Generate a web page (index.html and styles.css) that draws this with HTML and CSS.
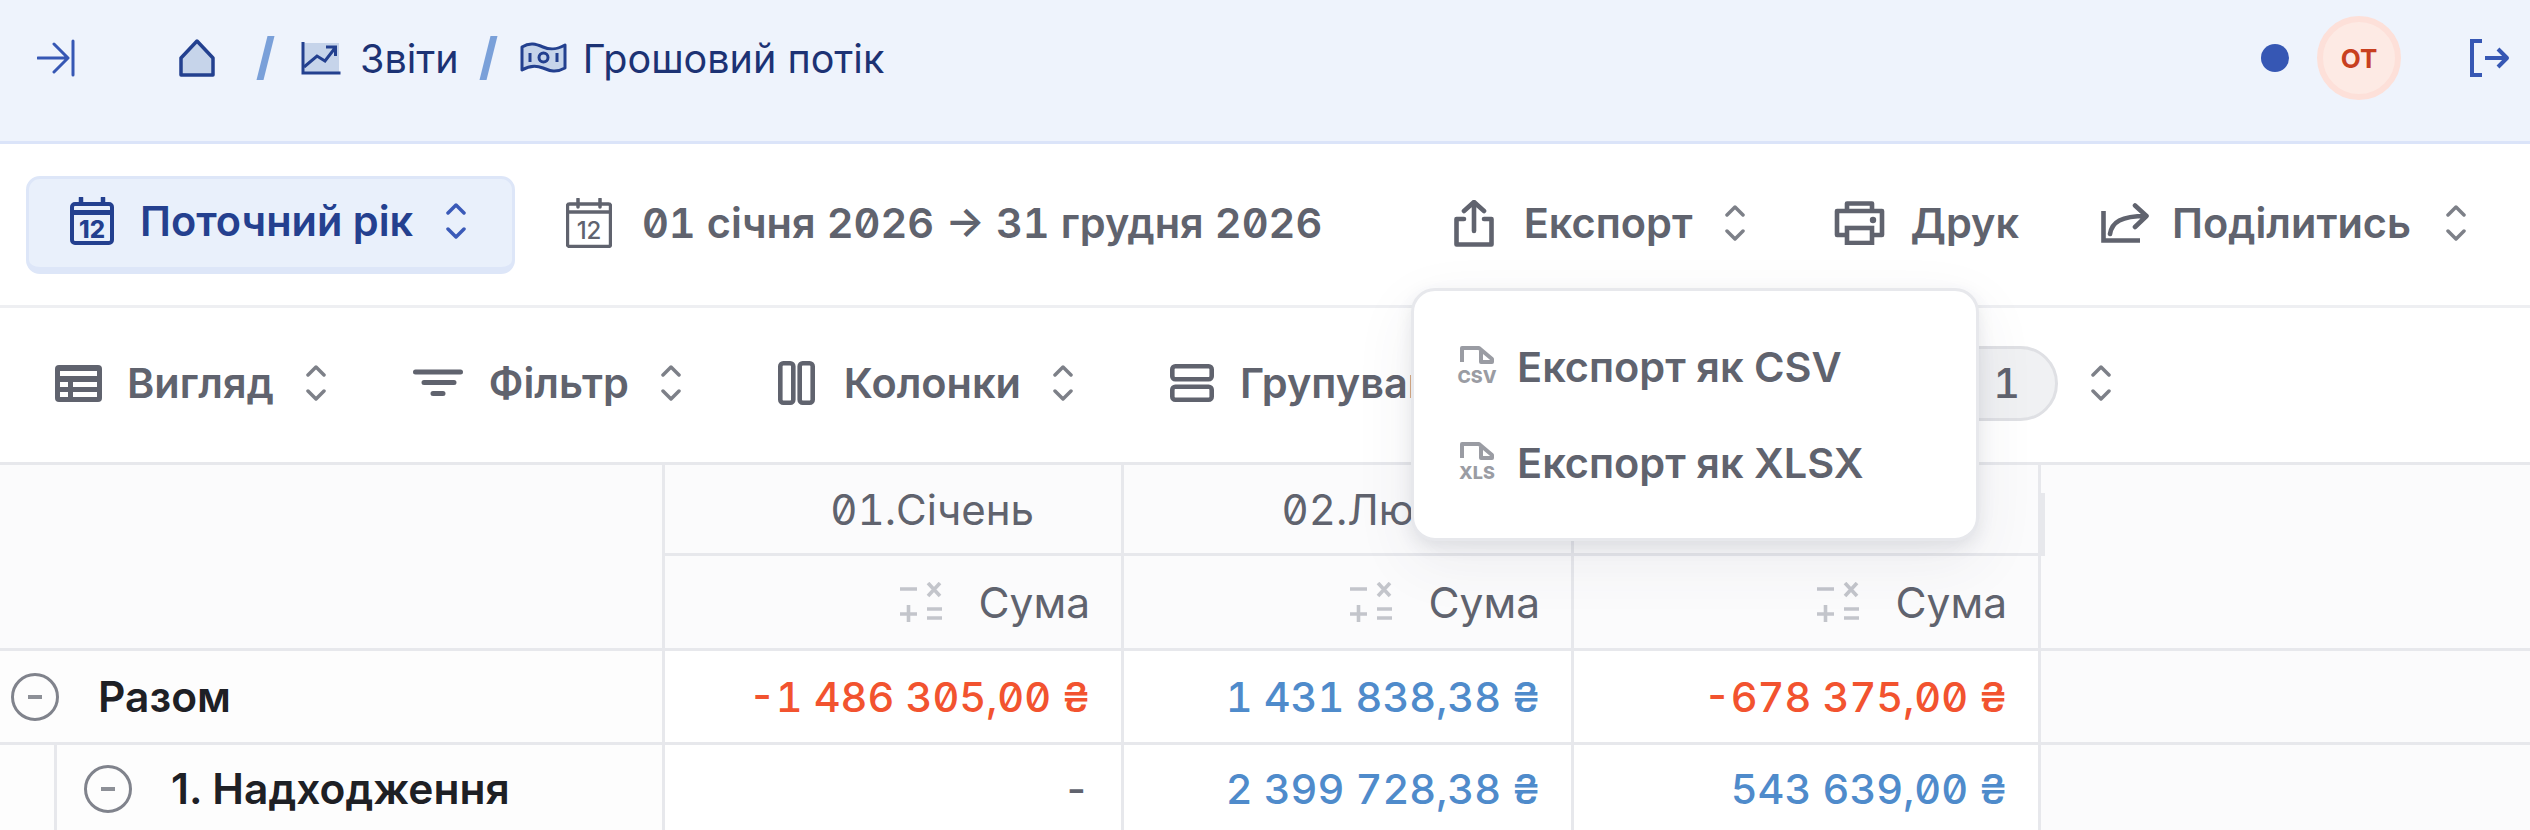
FILE: index.html
```html
<!DOCTYPE html>
<html lang="uk">
<head>
    <meta charset="UTF-8">
    <meta name="viewport" content="width=device-width, initial-scale=1.0">
    <title>Грошовий потік</title>
    <link rel="stylesheet" href="styles.css">
</head>
<body>

    <svg class="defs" width="0" height="0">
        <symbol id="updown" viewBox="0 0 20 36">
            <path d="M2 10 L10 2 L18 10 M2 26 L10 34 L18 26" fill="none" stroke="currentColor" stroke-width="3.5" stroke-linecap="round" stroke-linejoin="round"/>
        </symbol>
        <symbol id="minus" viewBox="0 0 48 48">
            <circle cx="24" cy="24" r="22.5" fill="none" stroke="#80838c" stroke-width="3"/>
            <path d="M17 24 H31" stroke="#8d9097" stroke-width="4"/>
        </symbol>
        <symbol id="calc" viewBox="0 0 44 40">
            <path d="M1 7 H18 M29 1 L41 14 M41 1 L29 14 M1 32 H18 M9.5 23 V40 M28 27 H43 M28 36 H43" fill="none" stroke="#c3c5cb" stroke-width="3.6"/>
        </symbol>
    </svg>

    <header class="topbar">
        <svg class="ico-side" width="38" height="38" viewBox="0 0 38 38">
            <path d="M1 19 H30 M17 5 L31 19 L17 33 M36 2 V36" fill="none" stroke="#3657b4" stroke-width="3" stroke-linecap="round" stroke-linejoin="round"/>
        </svg>
        <nav class="crumbs">
            <svg width="36" height="38" viewBox="0 0 36 38">
                <path d="M2 19 L18 2 L34 19 V36 H2 Z" fill="#c6d4ea" stroke="#23408f" stroke-width="3.5" stroke-linejoin="round"/>
            </svg>
            <span class="slash slash-first"></span>
            <svg width="40" height="34" viewBox="0 0 40 34">
                <path d="M3 2 H38 V32 H3 Z" fill="#c6d4ea"/>
                <path d="M2 1 V32 H39.5" fill="none" stroke="#23408f" stroke-width="3"/>
                <path d="M3 26 L16 15 L24 20 L34 7 M25 6 H34.5 V15" fill="none" stroke="#23408f" stroke-width="3"/>
            </svg>
            <a class="crumb crumb-reports">Звіти</a>
            <span class="slash"></span>
            <svg class="ico-money" width="47" height="32" viewBox="0 0 47 32">
                <path d="M2 5 C10 0 16 2 23 5 S36 8 45 3 V26 C36 31 30 29 23 26 S10 23 2 28 Z" fill="#c6d4ea" stroke="#23408f" stroke-width="3" stroke-linejoin="round"/>
                <circle cx="23.5" cy="15.5" r="4.5" fill="none" stroke="#23408f" stroke-width="3"/>
                <path d="M10 11 V20 M37 11 V20" stroke="#23408f" stroke-width="3"/>
            </svg>
            <a class="crumb">Грошовий потік</a>
        </nav>
        <div class="account">
            <span class="dot"></span>
            <span class="avatar">ОТ</span>
            <svg width="40" height="38" viewBox="0 0 40 38">
                <path d="M12 2 H2 V36 H12" fill="none" stroke="#3657b4" stroke-width="4"/>
                <path d="M15 19 H37 M28 10 L37 19 L28 28" fill="none" stroke="#3657b4" stroke-width="4" stroke-linejoin="round"/>
            </svg>
        </div>
    </header>

    <section class="toolbar">
        <button class="period">
            <svg width="44" height="48" viewBox="0 0 44 48">
                <path d="M11 1 V8 M33 1 V8" stroke="#23408f" stroke-width="4.5" stroke-linecap="round"/>
                <rect x="2" y="7" width="40" height="39" rx="3" fill="#e9f0fb" stroke="#23408f" stroke-width="4"/>
                <path d="M2 15.5 H42" stroke="#23408f" stroke-width="5"/>
                <text x="22" y="41" text-anchor="middle" class="cal-day cal-day-bold">12</text>
            </svg>
            <span>Поточний рік</span>
            <svg class="updown" width="20" height="36"><use href="#updown"/></svg>
        </button>
        <div class="range">
            <svg width="46" height="50" viewBox="0 0 46 50">
                <path d="M12 1 V9 M34 1 V9" stroke="#60636e" stroke-width="3.5" stroke-linecap="round"/>
                <rect x="1.5" y="6" width="43" height="42.5" rx="2" fill="none" stroke="#60636e" stroke-width="3.4"/>
                <path d="M1.5 14 H44.5" stroke="#60636e" stroke-width="3.5"/>
                <text x="23" y="41" text-anchor="middle" class="cal-day">12</text>
            </svg>
            <span class="nums">01 січня 2026 → 31 грудня 2026</span>
        </div>
        <div class="actions">
            <div class="tool tool-export">
                <svg width="40" height="47" viewBox="0 0 40 47">
                    <path d="M10 19 H2.5 V44.5 H37.5 V19 H30 M20 31 V3 M10 11 L20 2 L30 11" fill="none" stroke="#60636e" stroke-width="4.6" stroke-linecap="round" stroke-linejoin="round"/>
                </svg>
                <span>Експорт</span>
                <svg class="updown" width="20" height="36"><use href="#updown"/></svg>
            </div>
            <div class="tool tool-print">
                <svg width="51" height="44" viewBox="0 0 51 44">
                    <path d="M13 9 V2.5 H38 V9 M13 34 H3 V10 H48 V34 H38" fill="none" stroke="#60636e" stroke-width="4.6" stroke-linejoin="round"/>
                    <rect x="13" y="27" width="25" height="15" fill="none" stroke="#60636e" stroke-width="4.6"/>
                    <circle cx="39" cy="19" r="3.2" fill="#60636e"/>
                </svg>
                <span>Друк</span>
            </div>
            <div class="tool tool-share">
                <svg width="48" height="40" viewBox="0 0 48 40">
                    <path d="M2.5 8 V37.5 H39" fill="none" stroke="#60636e" stroke-width="4.6"/>
                    <path d="M9 31 C11 19 20 13 45 13 M34 2.5 L45.5 13 L34 24" fill="none" stroke="#60636e" stroke-width="4.6" stroke-linecap="round" stroke-linejoin="round"/>
                </svg>
                <span>Поділитись</span>
                <svg class="updown" width="20" height="36"><use href="#updown"/></svg>
            </div>
        </div>
    </section>

    <section class="toolbar toolbar-view">
        <div class="tool tool-view">
            <svg width="47" height="37" viewBox="0 0 47 37">
                <rect width="47" height="37" rx="4" fill="#60636e"/>
                <path d="M5 6 H42 V11 H5 Z M5 17 H13 V22 H5 Z M18 17 H42 V22 H18 Z M5 27 H13 V32 H5 Z M18 27 H42 V32 H18 Z" fill="#fff"/>
            </svg>
            <span>Вигляд</span>
            <svg class="updown" width="20" height="36"><use href="#updown"/></svg>
        </div>
        <div class="tool">
            <svg width="50" height="28" viewBox="0 0 50 28">
                <path d="M2.5 3 H47.5 M11 13.5 H41 M20 24.5 H30" stroke="#60636e" stroke-width="5" stroke-linecap="round"/>
            </svg>
            <span>Фільтр</span>
            <svg class="updown" width="20" height="36"><use href="#updown"/></svg>
        </div>
        <div class="tool tool-columns">
            <svg width="37" height="44" viewBox="0 0 37 44">
                <rect x="2.3" y="2.3" width="13" height="39.4" rx="3" fill="none" stroke="#60636e" stroke-width="4.6"/>
                <rect x="21.7" y="2.3" width="13" height="39.4" rx="3" fill="none" stroke="#60636e" stroke-width="4.6"/>
            </svg>
            <span>Колонки</span>
            <svg class="updown" width="20" height="36"><use href="#updown"/></svg>
        </div>
        <div class="tool tool-group">
            <svg width="44" height="38" viewBox="0 0 44 38">
                <rect x="2.3" y="2.3" width="39.4" height="13" rx="3" fill="none" stroke="#60636e" stroke-width="4.6"/>
                <rect x="2.3" y="22.7" width="39.4" height="13" rx="3" fill="none" stroke="#60636e" stroke-width="4.6"/>
            </svg>
            <span>Групування</span>
        </div>
        <span class="chip nums">1</span>
        <svg class="updown chip-arrows" width="20" height="36"><use href="#updown"/></svg>
    </section>

    <section class="report">
        <div class="cell head side"></div>
        <div class="cell head month nums">01.Січень</div>
        <div class="cell head month nums">02.Лютий</div>
        <div class="cell head month month-last nums">03.Березень</div>
        <div class="cell head rest rest-top"></div>

        <div class="cell head metric"><svg width="44" height="40"><use href="#calc"/></svg><span>Сума</span></div>
        <div class="cell head metric"><svg width="44" height="40"><use href="#calc"/></svg><span>Сума</span></div>
        <div class="cell head metric"><svg width="44" height="40"><use href="#calc"/></svg><span>Сума</span></div>
        <div class="cell head rest"></div>

        <div class="cell name"><svg width="48" height="48"><use href="#minus"/></svg><strong>Разом</strong></div>
        <div class="cell amount neg nums">-1 486 305,00 ₴</div>
        <div class="cell amount pos nums">1 431 838,38 ₴</div>
        <div class="cell amount neg nums">-678 375,00 ₴</div>
        <div class="cell rest"></div>

        <div class="cell name name-child"><i class="indent"></i><svg width="48" height="48"><use href="#minus"/></svg><strong>1. Надходження</strong></div>
        <div class="cell amount empty nums">-</div>
        <div class="cell amount pos nums">2 399 728,38 ₴</div>
        <div class="cell amount pos nums">543 639,00 ₴</div>
        <div class="cell rest"></div>
    </section>

    <div class="menu">
        <a class="menu-item">
            <svg width="40" height="44" viewBox="0 0 40 44">
                <path d="M5 17 V3 H22 L35 14 V17 H24 V6" fill="none" stroke="#9a9ca3" stroke-width="4" stroke-linejoin="round"/>
                <text x="20" y="38" text-anchor="middle" class="file-type">CSV</text>
            </svg>
            <span>Експорт як CSV</span>
        </a>
        <a class="menu-item">
            <svg width="40" height="44" viewBox="0 0 40 44">
                <path d="M5 17 V3 H22 L35 14 V17 H24 V6" fill="none" stroke="#9a9ca3" stroke-width="4" stroke-linejoin="round"/>
                <text x="20" y="38" text-anchor="middle" class="file-type">XLS</text>
            </svg>
            <span>Експорт як XLSX</span>
        </a>
    </div>

</body>
</html>
```

FILE: styles.css
```css
body {
    margin: 0;
    width: 2530px;
    height: 830px;
    overflow: hidden;
    position: relative;
    background: #fff;
    font-family: Inter, "Noto Sans", sans-serif;
    font-size: 41.5px;
    color: #60636e;
}
svg {
    flex: none;
    display: block;
}
.defs {
    position: absolute;
}
.nums {
    font-feature-settings: "zero", "tnum";
}

/* top bar */
.topbar {
    height: 144px;
    box-sizing: border-box;
    display: flex;
    align-items: center;
    padding: 0 20px 25px 37px;
    background: #eef3fc;
    border-bottom: 3px solid #dbe4f9;
}
.crumbs {
    display: flex;
    align-items: center;
    margin-left: 104px;
    color: #1c3274;
}
.crumb {
    padding-top: 2px;
    font-size: 39.5px;
}
.crumb-reports {
    margin-left: 19px;
}
.slash {
    width: 7px;
    height: 44px;
    margin: 0 28px 0 26px;
    background: #7aa0d9;
    transform: skewX(-14deg);
}
.slash-first {
    margin: 0 32px 0 47px;
}
.ico-money {
    margin-right: 16px;
}
.account {
    margin-left: auto;
    display: flex;
    align-items: center;
}
.dot {
    width: 28px;
    height: 28px;
    border-radius: 50%;
    background: #3657b4;
}
.avatar {
    width: 84px;
    height: 84px;
    margin: 0 69px 0 28px;
    box-sizing: border-box;
    display: flex;
    align-items: center;
    justify-content: center;
    border-radius: 50%;
    border: 6px solid #fde0d9;
    background: #fdeae4;
    color: #c8401f;
    font-size: 26px;
    font-weight: 700;
}

/* toolbars */
.toolbar {
    height: 164px;
    box-sizing: border-box;
    display: flex;
    align-items: center;
    padding: 0 0 3px 26px;
    border-bottom: 3px solid #eeeff2;
    font-weight: 600;
}
.updown {
    color: #7d8088;
}
.period {
    width: 489px;
    height: 98px;
    margin-top: 3px;
    box-sizing: border-box;
    display: flex;
    align-items: center;
    padding: 0 0 4px 41px;
    border: 3px solid #dde6f8;
    border-bottom-width: 7px;
    border-radius: 14px;
    background: #e9f0fb;
    color: #24408f;
    font: inherit;
}
.period span {
    margin: 0 33px 0 26px;
}
.period .updown {
    color: #3a5ab8;
}
.cal-day {
    font-size: 24px;
    font-weight: 500;
    fill: #60636e;
}
.cal-day-bold {
    font-weight: 800;
    fill: #23408f;
}
.range {
    display: flex;
    align-items: center;
    gap: 30px;
    margin-left: 51px;
}
.actions {
    display: flex;
    align-items: center;
    margin-left: auto;
    padding-right: 64px;
}
.tool {
    display: flex;
    align-items: center;
}
.tool span {
    margin: 0 32px 0 26px;
}
.tool-export span {
    margin-left: 30px;
}
.tool-print {
    margin-left: 89px;
}
.tool-print span {
    margin-right: 0;
}
.tool-share {
    margin-left: 82px;
}
.tool-share span {
    margin: 0 35px 0 23px;
}
.toolbar-view {
    height: 157px;
    padding: 0 0 4px 55px;
    border-bottom-color: #e7e8ec;
}
.toolbar-view .tool {
    margin-right: 97px;
}
.toolbar-view .tool-view {
    margin-right: 87px;
}
.tool-view span {
    margin-left: 25px;
}
.tool-columns span {
    margin-left: 29px;
}
.toolbar-view .tool-group {
    margin-right: 0;
}
.chip {
    width: 119px;
    height: 75px;
    margin-left: 425px;
    padding-left: 16px;
    box-sizing: border-box;
    display: flex;
    align-items: center;
    justify-content: center;
    border: 3px solid #dfe0e4;
    border-radius: 38px;
    background: #f0f1f3;
    font-weight: 500;
}
.chip-arrows {
    margin-left: 33px;
}

/* report table */
.report {
    display: grid;
    grid-template-columns: 665px 459px 450px 467px 1fr;
    grid-template-rows: 91px 95px 94px 90px;
}
.cell {
    box-sizing: border-box;
    display: flex;
    align-items: center;
    justify-content: flex-end;
    padding-right: 31px;
    border-right: 3px solid #e7e8ec;
    border-bottom: 3px solid #e7e8ec;
}
.head {
    background: #fbfbfc;
}
.side {
    grid-row: span 2;
}
.month {
    padding-right: 87px;
    font-size: 42px;
}
.month-last {
    position: relative;
}
.month-last::after {
    content: "";
    position: absolute;
    right: -7px;
    top: 28px;
    bottom: -3px;
    width: 4px;
    background: #e7e8ec;
}
.rest {
    border-right: 0;
    background: #fbfbfc;
}
.rest-top {
    border-bottom: 0;
}
.metric {
    gap: 35px;
    font-size: 42.5px;
}
.name {
    justify-content: flex-start;
    padding-left: 11px;
    background: #fdfdfd;
    color: #1e2025;
    font-size: 42.5px;
}
.name strong {
    margin-left: 39px;
    font-weight: 600;
}
.name-child {
    position: relative;
    padding-left: 84px;
}
.indent {
    position: absolute;
    left: 54px;
    top: 0;
    bottom: 0;
    width: 3px;
    background: #e7e8ec;
}
.amount {
    font-size: 41.5px;
    font-weight: 500;
}
.neg {
    color: #f2532f;
}
.pos {
    color: #4f8bcb;
}
.empty {
    color: #60636e;
}

/* export dropdown */
.menu {
    position: absolute;
    left: 1411px;
    top: 288px;
    width: 568px;
    height: 253px;
    box-sizing: border-box;
    padding: 28px 0 0 43px;
    background: #fff;
    border: 3px solid #e7e8ec;
    border-radius: 24px;
    box-shadow: 0 20px 60px rgba(60, 65, 90, .08), 0 6px 16px rgba(60, 65, 90, .1);
}
.menu-item {
    height: 96px;
    display: flex;
    align-items: center;
    gap: 20px;
    font-weight: 600;
}
.file-type {
    font-size: 18px;
    font-weight: 800;
    fill: #9a9ca3;
}
```
